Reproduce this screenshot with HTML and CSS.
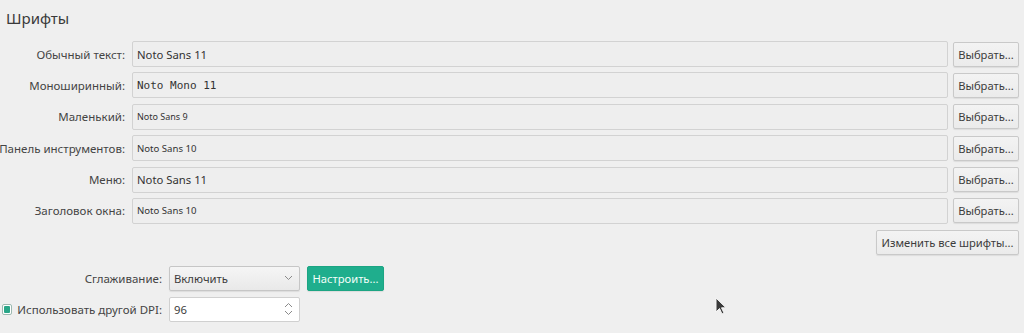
FILE: index.html
```html
<!DOCTYPE html>
<html lang="ru">
<head>
    <meta charset="UTF-8">
    <title>Шрифты</title>
    <link rel="stylesheet" href="styles.css">
</head>
<body>
    <div class="page">
        <h1 class="title">Шрифты</h1>

        <div class="font-grid">
            <div class="label">Обычный текст:</div>
            <div class="field sans-11">Noto Sans 11</div>
            <button class="btn">Выбрать...</button>

            <div class="label">Моноширинный:</div>
            <div class="field mono-11">Noto Mono 11</div>
            <button class="btn">Выбрать...</button>

            <div class="label">Маленький:</div>
            <div class="field sans-9">Noto Sans 9</div>
            <button class="btn">Выбрать...</button>

            <div class="label">Панель инструментов:</div>
            <div class="field sans-10">Noto Sans 10</div>
            <button class="btn">Выбрать...</button>

            <div class="label">Меню:</div>
            <div class="field sans-11">Noto Sans 11</div>
            <button class="btn">Выбрать...</button>

            <div class="label">Заголовок окна:</div>
            <div class="field sans-10">Noto Sans 10</div>
            <button class="btn">Выбрать...</button>
        </div>

        <div class="change-all">
            <button class="btn">Изменить все шрифты...</button>
        </div>

        <div class="extra-grid">
            <div class="label">Сглаживание:</div>
            <div class="combo">
                <span>Включить</span>
                <svg class="chevron" width="9" height="6" viewBox="0 0 9 6"><path d="M1 1l3.5 3.5L8 1" fill="none" stroke="#8a8a8a" stroke-width="1"/></svg>
            </div>
            <button class="btn btn-accent">Настроить...</button>

            <label class="label check-label">
                <span class="checkbox"><span class="check-fill"></span></span>
                Использовать другой DPI:
            </label>
            <div class="spin">
                <span>96</span>
                <svg class="spin-arrows" width="9" height="14" viewBox="0 0 9 14"><path d="M1 5l3.5-3.5L8 5M1 9l3.5 3.5L8 9" fill="none" stroke="#8a8a8a" stroke-width="1"/></svg>
            </div>
            <div></div>
        </div>

        <svg class="cursor" width="12" height="18" viewBox="0 0 12 18"><path d="M1 1v14l3.5-3.5 2.5 5.5 2-1-2.5-5.2H11z" fill="#3a3a3a" stroke="#f4f4f4" stroke-width="1"/></svg>
    </div>
</body>
</html>
```

FILE: styles.css
```css
body {
    margin: 0;
    background: #efefef;
    font-family: "Noto Sans", sans-serif;
    font-size: 11.5px;
    color: #3c3c3c;
}
.page {
    position: relative;
    height: 333px;
    padding: 0 5px 0 0;
    box-sizing: border-box;
    overflow: hidden;
}
.title {
    margin: 0;
    padding: 8px 0 0 6px;
    height: 41px;
    box-sizing: border-box;
    font-size: 15px;
    font-weight: normal;
    color: #3a3a3a;
}
.font-grid {
    display: grid;
    grid-template-columns: 125px 1fr 66px;
    column-gap: 5px;
    row-gap: 5.4px;
    align-items: center;
}
.label {
    display: flex;
    justify-content: flex-end;
    align-items: center;
    white-space: nowrap;
    color: #444;
}
.font-grid .field {
    margin-left: 2px;
}
.field {
    height: 26px;
    box-sizing: border-box;
    display: flex;
    align-items: center;
    padding-left: 4px;
    border: 1px solid #d2d2d2;
    border-radius: 2px;
    background: #eeeeee;
    color: #333;
}
.sans-11 { font-size: 11.3px; }
.sans-10 { font-size: 9.6px; }
.sans-9 { font-size: 9px; }
.mono-11 { font-family: "DejaVu Sans Mono", monospace; font-size: 11px; }
.btn {
    height: 25px;
    padding: 0 4px;
    font-family: "Noto Sans", sans-serif;
    font-size: 11.2px;
    color: #3c3c3c;
    background: linear-gradient(#f3f3f3, #ebebeb);
    border: 1px solid #c9c9c9;
    border-radius: 2px;
    box-shadow: 0 1px 1px rgba(0,0,0,0.08);
    white-space: nowrap;
}
.change-all {
    display: flex;
    justify-content: flex-end;
    margin-top: 6px;
}
.change-all .btn {
    width: 143px;
}
.extra-grid {
    display: grid;
    grid-template-columns: 162px 131px 77px 1fr;
    column-gap: 7px;
    row-gap: 6px;
    align-items: center;
    margin-top: 11px;
}
.extra-grid .btn-accent {
    grid-column: 3 / 5;
}
.combo {
    height: 25px;
    box-sizing: border-box;
    display: flex;
    align-items: center;
    justify-content: space-between;
    padding: 0 6px 0 4px;
    border: 1px solid #c6c6c6;
    border-radius: 2px;
    background: linear-gradient(#f5f5f5, #e9e9e9);
    box-shadow: 0 1px 1px rgba(0,0,0,0.08);
    font-size: 11.3px;
}
.btn-accent {
    justify-self: start;
    width: 77px;
    height: 25px;
    padding: 0 3px;
    color: #f4fffb;
    background: #1fae8d;
    border-color: #1ca583;
}
.check-label {
    justify-content: flex-start;
    gap: 5px;
    padding-left: 2px;
}
.checkbox {
    width: 11px;
    height: 11px;
    box-sizing: border-box;
    border: 1px solid #9cb9b0;
    border-radius: 2px;
    background: #fff;
    padding: 1px;
    display: flex;
}
.check-fill {
    flex: 1;
    background: #2aa688;
    border-radius: 1px;
}
.spin {
    height: 25px;
    box-sizing: border-box;
    display: flex;
    align-items: center;
    justify-content: space-between;
    padding: 0 6px 0 4px;
    border: 1px solid #d0d0d0;
    border-radius: 2px;
    background: #fff;
    font-size: 11.3px;
}
.cursor {
    position: absolute;
    left: 715px;
    top: 297px;
}
```
